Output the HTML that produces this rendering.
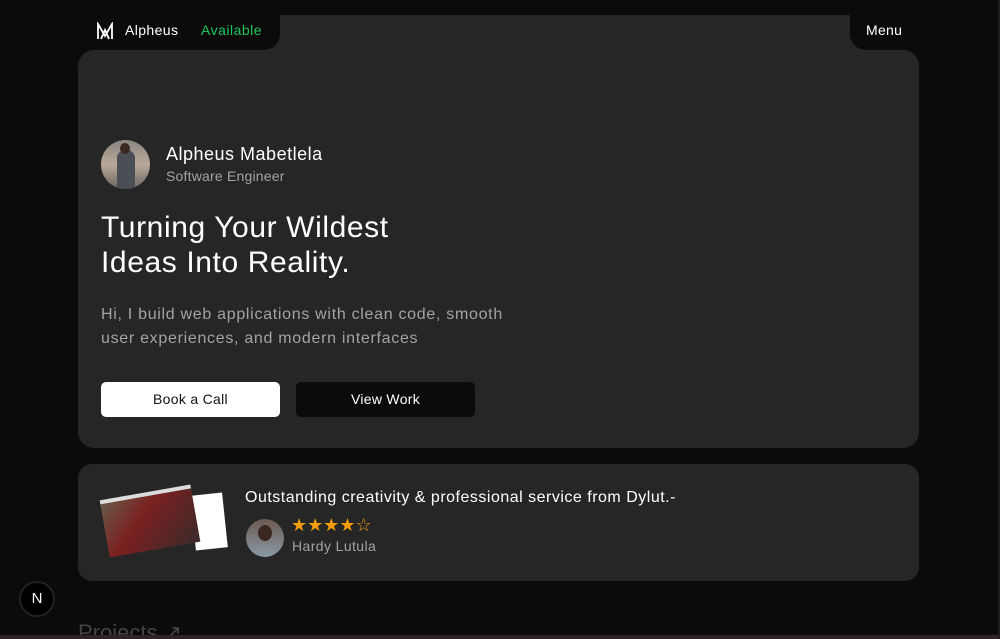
<!DOCTYPE html>
<html><head><style>
*{margin:0;padding:0;box-sizing:border-box}
html,body{width:1000px;height:639px;overflow:hidden}
body{background:#0b0b0b;font-family:"Liberation Sans",sans-serif;position:relative;color:#fff}
.card{position:absolute;left:78px;top:15px;width:841px;height:433px;background:#262626;border-radius:16px}
.tabl{position:absolute;left:78px;top:15px;width:202px;height:35px;background:#0b0b0b;border-bottom-right-radius:16px}
.tabr{position:absolute;left:850px;top:15px;width:69px;height:35px;background:#0b0b0b;border-bottom-left-radius:16px}
.c1{position:absolute;left:78px;top:50px;width:16px;height:16px;background:#0b0b0b}
.c1::after{content:"";position:absolute;inset:0;background:#262626;border-top-left-radius:16px}
.c2{position:absolute;left:903px;top:50px;width:16px;height:16px;background:#0b0b0b}
.c2::after{content:"";position:absolute;inset:0;background:#262626;border-top-right-radius:16px}
.t{position:absolute;white-space:nowrap}
.btn{position:absolute;top:382px;height:35px;border-radius:5px;font-size:14px;text-align:center;line-height:35px;letter-spacing:.3px}
.card2{position:absolute;left:78px;top:464px;width:841px;height:117px;background:#262626;border-radius:14px}
.av{position:absolute;border-radius:50%;overflow:hidden}
</style></head><body>
<div class="card"></div><div class="tabl"></div><div class="tabr"></div><div class="c1"></div><div class="c2"></div>
<svg style="position:absolute;left:96px;top:22px" width="18" height="18" viewBox="0 0 18 18" fill="none" stroke="#fff" stroke-width="1.8"><path d="M2 17V2l7 12 7-12v15M5 17l4-9 4 9"/></svg>
<div class="t" style="left:125px;top:22px;font-size:14px;letter-spacing:.4px">Alpheus</div>
<div class="t" style="left:201px;top:22px;font-size:14px;color:#22c55e;letter-spacing:.5px">Available</div>
<div class="t" style="left:866px;top:22px;font-size:14px;letter-spacing:.3px">Menu</div>
<div class="av" style="left:101px;top:140px;width:49px;height:49px;background:linear-gradient(180deg,#8a8580 0%,#b8a89a 50%,#6b6560 100%)"><div style="position:absolute;left:16px;top:10px;width:18px;height:40px;background:#4a4e55;border-radius:8px 8px 0 0"></div><div style="position:absolute;left:19px;top:3px;width:10px;height:11px;background:#3a2a22;border-radius:50%"></div></div>
<div class="t" style="left:166px;top:144px;font-size:18px;letter-spacing:.5px">Alpheus Mabetlela</div>
<div class="t" style="left:166px;top:168px;font-size:14px;color:#a3a3a3;letter-spacing:.2px">Software Engineer</div>
<div class="t" style="left:101px;top:210px;font-size:30px;line-height:35px;letter-spacing:.6px">Turning Your Wildest<br>Ideas Into Reality.</div>
<div class="t" style="left:101px;top:303px;font-size:16px;line-height:24px;color:#a3a3a3;letter-spacing:.7px">Hi, I build web applications with clean code, smooth<br>user experiences, and modern interfaces</div>
<div class="btn" style="left:101px;width:179px;background:#fff;color:#111">Book a Call</div>
<div class="btn" style="left:296px;width:179px;background:#0b0b0b;color:#fff">View Work</div>
<div class="card2"></div>
<div style="position:absolute;left:193px;top:494px;width:32px;height:55px;background:#fff;transform:rotate(-6deg)"></div>
<div style="position:absolute;left:104px;top:492px;width:92px;height:58px;background:linear-gradient(135deg,#6a5a48,#7a2020 40%,#3a2a2a);transform:rotate(-10deg);border-top:4px solid #ddd"></div>
<div class="t" style="left:245px;top:489px;font-size:16px;letter-spacing:.5px">Outstanding creativity &amp; professional service from Dylut.-</div>
<div class="av" style="left:246px;top:519px;width:38px;height:38px;background:linear-gradient(180deg,#6a5a50,#8a9aa8)"><div style="position:absolute;left:12px;top:6px;width:14px;height:16px;background:#3a2820;border-radius:50%"></div></div>
<div class="t" style="left:291px;top:515px;font-size:18px;color:#f59e0b;letter-spacing:0px">★★★★☆</div>
<div class="t" style="left:292px;top:538px;font-size:14px;color:#a3a3a3;letter-spacing:.4px">Hardy Lutula</div>
<div style="position:absolute;left:19px;top:581px;width:36px;height:36px;border-radius:50%;background:#000;border:2px solid #222;color:#fff;font-size:15px;text-align:center;line-height:32px">N</div>
<div class="t" style="left:78px;top:620px;font-size:22px;color:#444">Projects ↗</div>
<div style="position:absolute;left:0;top:635px;width:1000px;height:4px;background:#2e2424"></div>
<div style="position:absolute;left:998px;top:0;width:2px;height:639px;background:#241c1c"></div>
</body></html>
